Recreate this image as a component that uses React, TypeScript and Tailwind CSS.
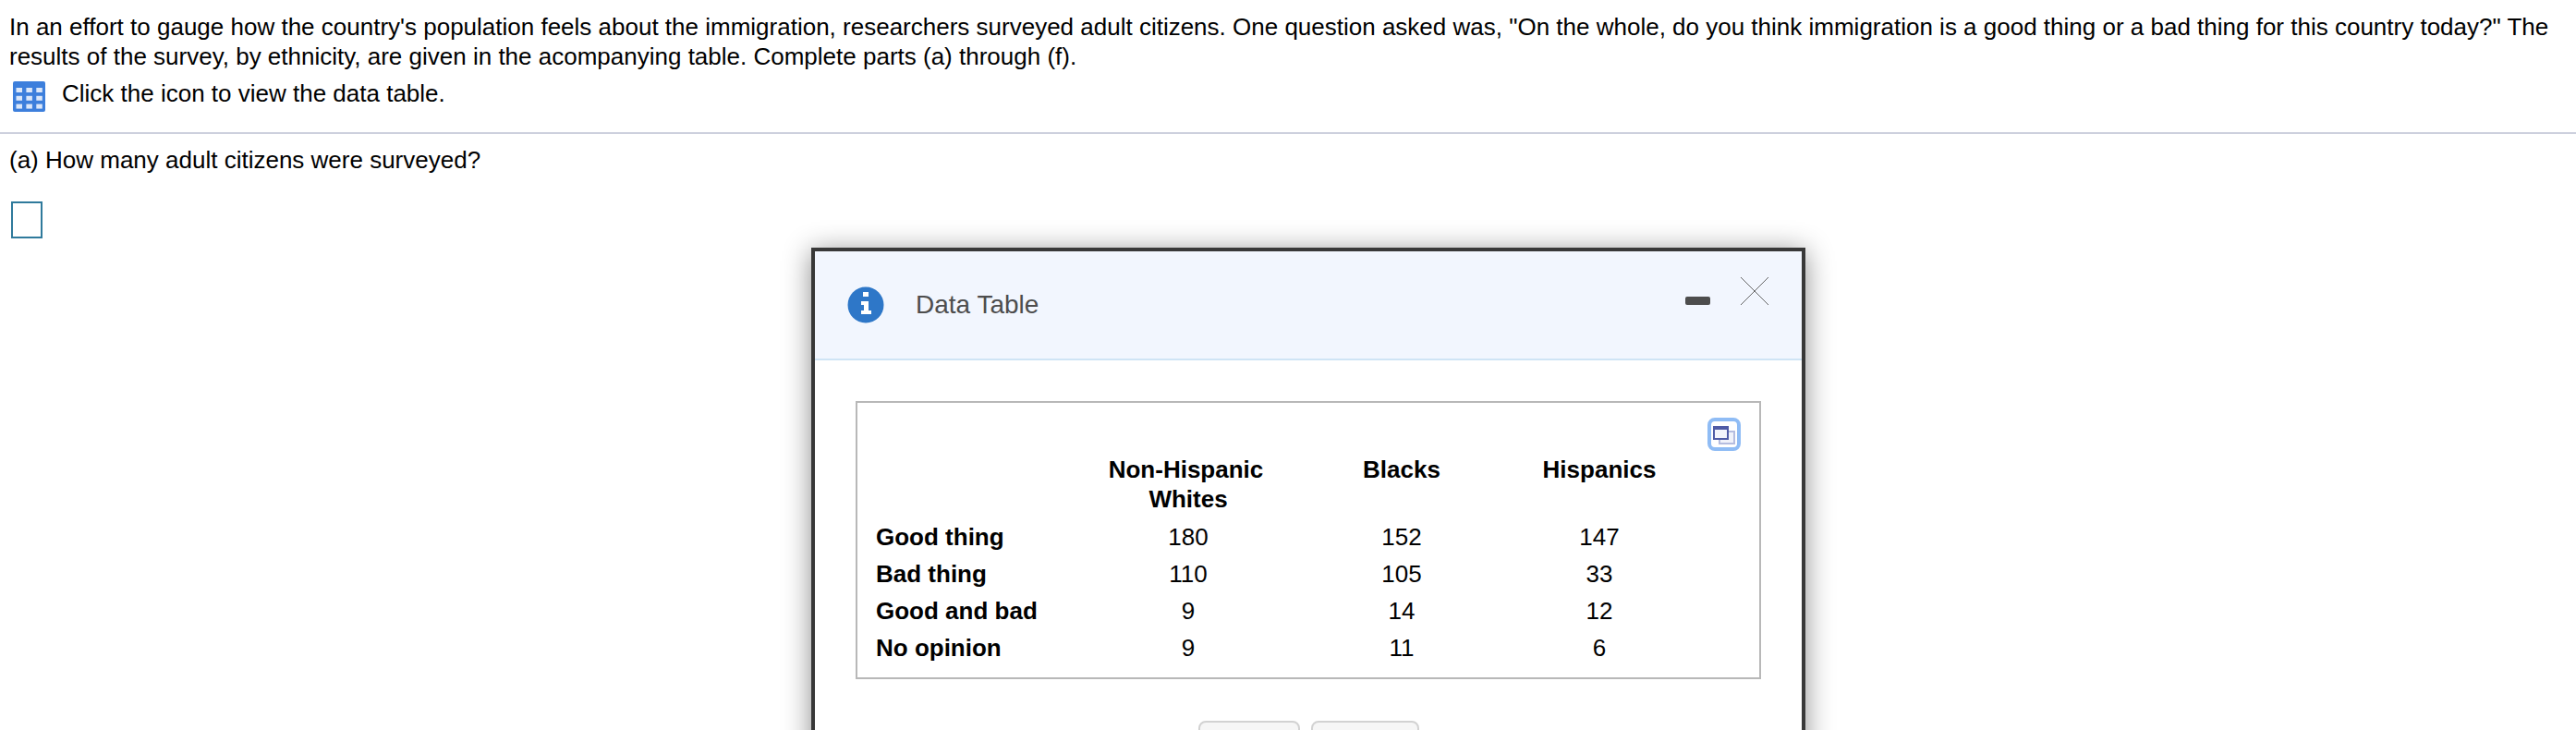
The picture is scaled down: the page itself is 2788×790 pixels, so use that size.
const rows: [string, string, string, string][] = [
  ["Good thing", "180", "152", "147"],
  ["Bad thing", "110", "105", "33"],
  ["Good and bad", "9", "14", "12"],
  ["No opinion", "9", "11", "6"],
];

function TableIcon() {
  const cells = [0, 1, 2].flatMap((r) => [0, 1, 2].map((c) => [c, r]));
  return (
    <svg width="35" height="33" viewBox="0 0 35 33" className="shrink-0">
      <rect x="0" y="0" width="35" height="33" rx="2" fill="#3d7fdc" />
      {cells.map(([c, r]) => (
        <rect key={`${c}-${r}`} x={3.5 + c * 10.9} y={7 + r * 8.8} width="6.5" height="5" fill="#dbe7f9" />
      ))}
    </svg>
  );
}

function InfoIcon() {
  return (
    <svg width="40" height="40" viewBox="0 0 40 40" className="shrink-0">
      <circle cx="20" cy="20" r="19.5" fill="#2e77c8" />
      <rect x="17" y="6" width="6" height="5" fill="#fff" />
      <path d="M15 16h8v10h3v4H15v-4h3v-6h-3z" fill="#fff" />
    </svg>
  );
}

function ExpandIcon() {
  return (
    <svg width="36" height="36" viewBox="0 0 36 36">
      <rect x="2" y="2" width="32" height="32" rx="6" fill="#fff" stroke="#8fbcf5" strokeWidth="4" />
      <rect x="13" y="15" width="16" height="13" fill="#f0f2fa" stroke="#b4bcdf" strokeWidth="2" />
      <rect x="7" y="10" width="15" height="13" fill="#f3f4fb" stroke="#4f5ba6" strokeWidth="2" />
      <rect x="6" y="9" width="17" height="4" fill="#4f5ba6" />
    </svg>
  );
}

export default function App() {
  return (
    <div className="relative h-[790px] w-[2788px] overflow-hidden bg-white font-['Liberation_Sans',Arial,sans-serif] text-[26px] leading-[32px] text-black">
      <div className="pl-[10px] pt-[13px]">
        <p className="w-[2770px]">
          In an effort to gauge how the country's population feels about the immigration, researchers surveyed adult citizens. One question asked was, "On the whole, do you think immigration is a good thing or a bad thing for this country today?" The results of the survey, by ethnicity, are given in the acompanying table. Complete parts (a) through (f).
        </p>
        <div className="mt-[11px] flex items-start gap-[18px] pl-[4px]">
          <TableIcon />
          <span className="-mt-[3px]">Click the icon to view the data table.</span>
        </div>
      </div>
      <div className="mt-[22px] h-[2px] bg-[#cdd0dd]" />
      <p className="mt-[12px] px-[10px]">(a) How many adult citizens were surveyed?</p>
      <div className="ml-[12px] mt-[29px] h-[40px] w-[34px] border-2 border-[#2f7a9c]" />

      <div className="absolute left-[878px] top-[268px] h-[700px] w-[1076px] border-4 border-[#383838] bg-white shadow-[0_4px_28px_rgba(0,0,0,0.45)]">
        <div className="relative flex h-[118px] items-center border-b-2 border-[#cfe4f5] bg-[#f2f6fe] pl-[35px]">
          <InfoIcon />
          <span className="ml-[34px] text-[28px] text-[#4d4d4d]">Data Table</span>
          <div className="absolute left-[942px] top-[49px] h-[9px] w-[27px] rounded-[2px] bg-[#4d4d4d]" />
          <svg width="32" height="32" viewBox="0 0 32 32" className="absolute left-[1001px] top-[27px]">
            <path d="M1 1L31 31M31 1L1 31" stroke="#666" strokeWidth="1" fill="none" />
          </svg>
        </div>
        <div className="relative mx-[44px] mt-[44px] h-[301px] border-2 border-[#b8b8b8] pb-[11px] pl-[20px] pt-[56px]">
          <div className="absolute right-[20px] top-[16px]">
            <ExpandIcon />
          </div>
          <div className="grid grid-cols-[223px_230px_232px_196px] text-center font-bold">
            <div />
            <div className="h-[69px]">
              <span className="inline-block pr-[5px]">Non-Hispanic</span>
              <br />
              Whites
            </div>
            <div>Blacks</div>
            <div>Hispanics</div>
          </div>
          {rows.map((r) => (
            <div key={r[0]} className="grid h-[40px] grid-cols-[223px_230px_232px_196px] items-center text-center">
              <div className="text-left font-bold">{r[0]}</div>
              <div>{r[1]}</div>
              <div>{r[2]}</div>
              <div>{r[3]}</div>
            </div>
          ))}
        </div>
        <div className="mt-[45px] flex justify-center gap-[12px]">
          <div className="h-[60px] w-[110px] rounded-[8px] border-2 border-[#d2d2d2] bg-[#f6f6f6]" />
          <div className="h-[60px] w-[117px] rounded-[8px] border-2 border-[#d2d2d2] bg-[#f6f6f6]" />
        </div>
      </div>
    </div>
  );
}
